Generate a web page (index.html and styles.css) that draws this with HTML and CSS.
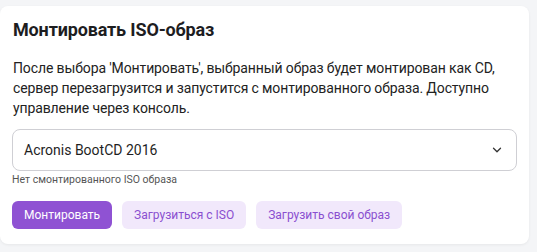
FILE: index.html
```html
<!DOCTYPE html>
<html lang="ru">
<head>
<meta charset="utf-8">
<title>Монтировать ISO-образ</title>
<link rel="stylesheet" href="styles.css">
</head>
<body>
<section class="card">
  <h2 class="title">Монтировать ISO-образ</h2>
  <p class="desc">После выбора 'Монтировать', выбранный образ будет монтирован как CD, сервер перезагрузится и запустится с монтированного образа. Доступно управление через консоль.</p>
  <div class="select">
    <span class="select-value">Acronis BootCD 2016</span>
    <svg class="chevron" width="10" height="6" viewBox="0 0 10 6"><path d="M1.5 1.2l3.5 3.5 3.5-3.5" fill="none" stroke="#333" stroke-width="1.3" stroke-linecap="round" stroke-linejoin="round"/></svg>
  </div>
  <div class="hint">Нет смонтированного ISO образа</div>
  <div class="actions">
    <button class="btn btn-primary">Монтировать</button>
    <button class="btn btn-soft">Загрузиться с ISO</button>
    <button class="btn btn-soft">Загрузить свой образ</button>
  </div>
</section>
</body>
</html>
```
FILE: styles.css
```css
html, body {
  margin: 0;
  background: #f4f5f7;
}
body {
  padding: 6px 8px 8px 0;
  font-family: Roboto, "Noto Sans", sans-serif;
  color: #1f1f1f;
}
.card {
  background: #fff;
  border-radius: 8px;
  box-shadow: 0 1px 3px rgba(0,0,0,0.06);
  padding: 12px 12px 15px 12px;
}
.title {
  margin: 0 0 16px 1px;
  font-size: 18px;
  line-height: 24px;
  font-weight: 700;
  letter-spacing: -0.15px;
  color: #1d1d1f;
}
.desc {
  margin: 0 0 11px 1px;
  font-size: 14px;
  line-height: 20px;
  letter-spacing: -0.12px;
  color: #222;
}
.select {
  height: 42px;
  box-sizing: border-box;
  border: 1px solid #cfcfd4;
  border-radius: 8px;
  display: flex;
  align-items: center;
  justify-content: space-between;
  padding: 0 14px 0 11px;
}
.select-value {
  font-size: 14px;
  color: #1f1f1f;
}
.chevron {
  display: block;
}
.hint {
  margin-top: 2px;
  font-size: 10.5px;
  line-height: 14px;
  color: #555;
}
.actions {
  margin-top: 14px;
  display: flex;
  gap: 10px;
}
.btn {
  height: 28px;
  border: none;
  border-radius: 6px;
  padding: 0 12px;
  font-family: Roboto, "Noto Sans", sans-serif;
  font-size: 12px;
  cursor: pointer;
}
.btn-primary {
  background: #8f52d3;
  color: #fff;
}
.btn-soft {
  background: #f1e8fb;
  color: #8a4fd0;
}
```
